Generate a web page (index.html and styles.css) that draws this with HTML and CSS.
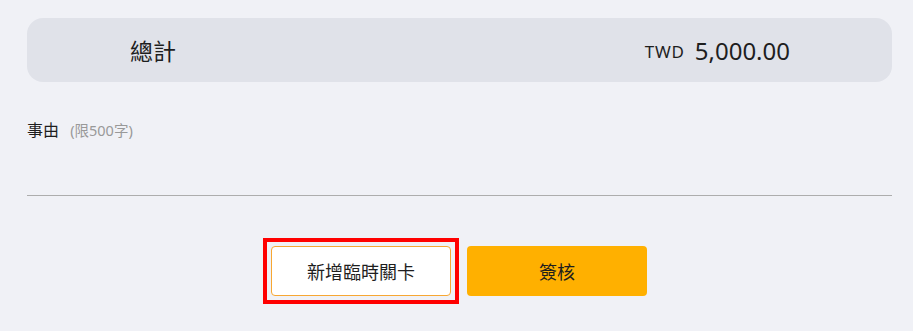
FILE: index.html
```html
<!DOCTYPE html>
<html lang="zh-Hant">
<head>
    <meta charset="UTF-8">
    <meta name="viewport" content="width=device-width, initial-scale=1.0">
    <title>簽核</title>
    <link rel="stylesheet" href="styles.css">
</head>
<body>
    <div class="page">
        <div class="total-box">
            <span class="total-label">總計</span>
            <span class="total-amount"><span class="currency">TWD</span>5,000.00</span>
        </div>

        <div class="reason">
            <div class="reason-label">事由 <span class="reason-hint">(限500字)</span></div>
            <div class="reason-field"></div>
        </div>

        <div class="button-group">
            <div class="highlight">
                <button class="btn btn-outline">新增臨時關卡</button>
            </div>
            <button class="btn btn-primary">簽核</button>
        </div>
    </div>
</body>
</html>
```

FILE: styles.css
```css
body{
    margin: 0;
    background: #f0f1f6;
    font-family: "Noto Sans", "Noto Sans CJK TC", sans-serif;
    color: #1e1e1e;
}
.page{
    padding: 18px 21px 0 27px;
}
.total-box{
    height: 64px;
    background: #e0e2e9;
    border-radius: 16px;
    display: flex;
    align-items: center;
    justify-content: space-between;
    padding: 0 102px 0 103px;
}
.total-label{
    font-size: 23px;
}
.total-amount{
    font-size: 24px;
}
.currency{
    font-size: 17px;
    letter-spacing: 0.8px;
    margin-right: 10px;
    vertical-align: 2px;
}
.reason{
    margin-top: 38px;
}
.reason-label{
    font-size: 16px;
    line-height: 20px;
}
.reason-hint{
    font-size: 14.5px;
    color: #999;
    margin-left: 7px;
}
.reason-field{
    height: 55px;
    border-bottom: 1px solid #adadad;
}
.button-group{
    margin-top: 42px;
    display: flex;
    justify-content: center;
    align-items: center;
    gap: 8px;
    padding-right: 9px;
}
.highlight{
    border: 4px solid #ff0000;
    padding: 4px;
    display: flex;
}
.btn{
    width: 180px;
    height: 50px;
    border-radius: 4px;
    font-family: "Noto Sans", "Noto Sans CJK TC", sans-serif;
    font-size: 18px;
    color: #1e1e1e;
    cursor: pointer;
}
.btn-outline{
    background: #fff;
    border: 1px solid #f7a733;
}
.btn-primary{
    background: #ffb000;
    border: none;
}
```
